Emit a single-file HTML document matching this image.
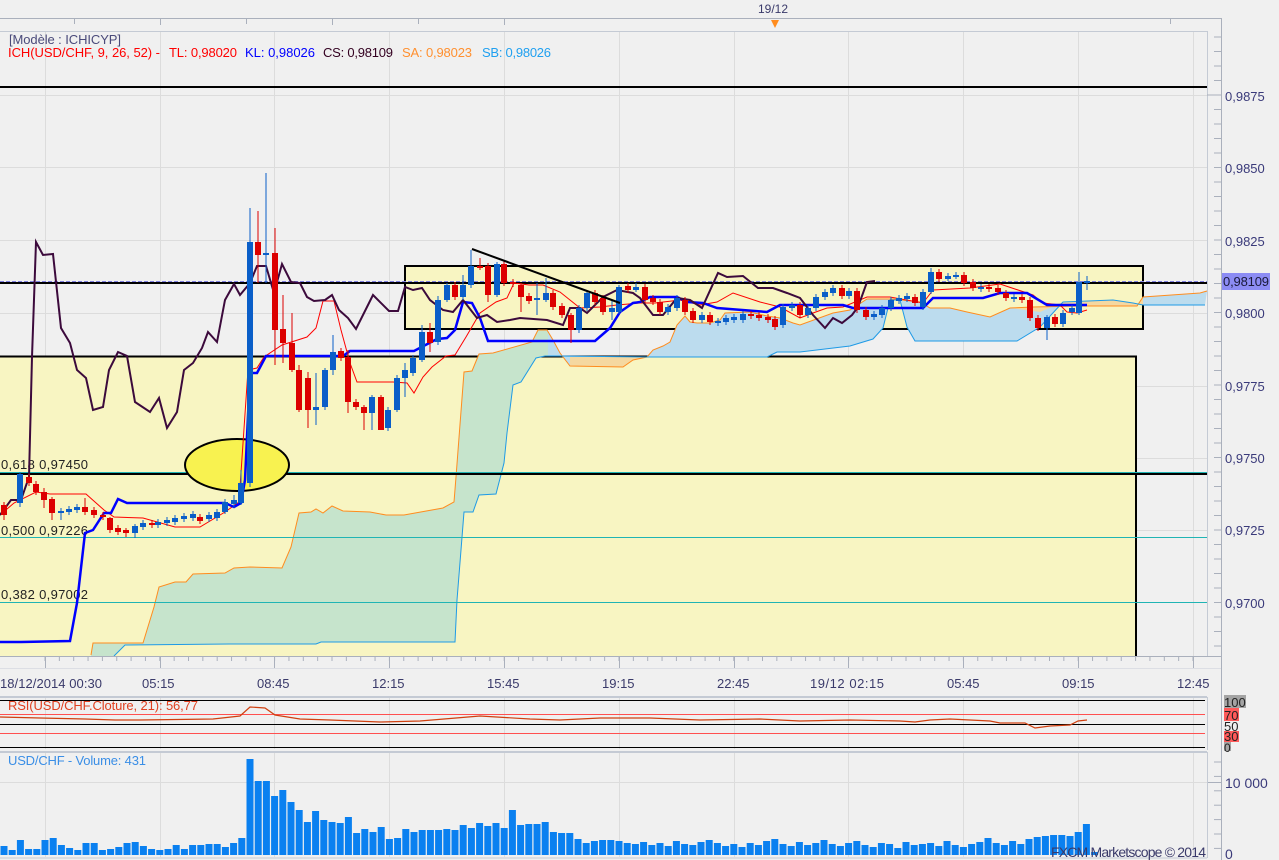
<!DOCTYPE html>
<html><head><meta charset="utf-8"><style>
html,body{margin:0;padding:0;background:#f0f0f0;width:1279px;height:860px;overflow:hidden}
svg{display:block;font-family:"Liberation Sans",sans-serif}
</style></head><body>
<svg id="s" width="1279" height="860" viewBox="0 0 1279 860" xmlns="http://www.w3.org/2000/svg">
<rect width="1279" height="860" fill="#f0f0f0"/>
<line x1="0" y1="18.5" x2="1221" y2="18.5" stroke="#aab0bc"/>
<line x1="1221.5" y1="18" x2="1221.5" y2="860" stroke="#aab0bc"/>
<line x1="0" y1="31.5" x2="1207" y2="31.5" stroke="#c4cad4"/>
<line x1="1207.5" y1="31" x2="1207.5" y2="657" stroke="#c4cad4"/>
<g stroke="#dcdcdc" stroke-width="1">
<line x1="45.5" y1="32" x2="45.5" y2="656"/><line x1="160.5" y1="32" x2="160.5" y2="656"/><line x1="274.5" y1="32" x2="274.5" y2="656"/><line x1="389.5" y1="32" x2="389.5" y2="656"/><line x1="504.5" y1="32" x2="504.5" y2="656"/><line x1="619.5" y1="32" x2="619.5" y2="656"/><line x1="734.5" y1="32" x2="734.5" y2="656"/><line x1="848.5" y1="32" x2="848.5" y2="656"/><line x1="963.5" y1="32" x2="963.5" y2="656"/><line x1="1078.5" y1="32" x2="1078.5" y2="656"/><line x1="1193.5" y1="32" x2="1193.5" y2="656"/>
<line x1="0" y1="95.5" x2="1207" y2="95.5"/><line x1="0" y1="167.5" x2="1207" y2="167.5"/><line x1="0" y1="240.5" x2="1207" y2="240.5"/><line x1="0" y1="313.5" x2="1207" y2="313.5"/><line x1="0" y1="386.5" x2="1207" y2="386.5"/><line x1="0" y1="458.5" x2="1207" y2="458.5"/><line x1="0" y1="530.5" x2="1207" y2="530.5"/>
</g>
<g stroke="#aab0bc"><line x1="74.5" y1="19" x2="74.5" y2="24"/><line x1="160.5" y1="19" x2="160.5" y2="25"/><line x1="246.5" y1="19" x2="246.5" y2="24"/><line x1="332.5" y1="19" x2="332.5" y2="25"/><line x1="418.5" y1="19" x2="418.5" y2="24"/><line x1="504.5" y1="19" x2="504.5" y2="25"/><line x1="1170.5" y1="19" x2="1170.5" y2="24"/></g>
<text x="758" y="13" font-size="12" fill="#3a3a6a">19/12</text>
<polygon points="771,20 779,20 775,28" fill="#ff8c1e"/>
<rect x="0" y="356.5" width="1136" height="300" fill="#f8f5c2"/>
<polyline points="0,356.5 1136,356.5 1136,656" fill="none" stroke="#000" stroke-width="2"/>
<rect x="405" y="266" width="738" height="63" fill="#f8f5c2" stroke="#000" stroke-width="2"/>
<clipPath id="cl"><rect x="0" y="0" width="548" height="656"/></clipPath>
<clipPath id="cr"><rect x="548" y="0" width="700" height="656"/></clipPath>
<g id="cloud"></g>
<g stroke="#20b4b4" stroke-width="1"><line x1="0" y1="472.5" x2="1207" y2="472.5"/><line x1="0" y1="537.5" x2="1207" y2="537.5"/><line x1="0" y1="602.5" x2="1207" y2="602.5"/></g>
<g font-size="13" fill="#222"><text x="1" y="469" textLength="87">0,618 0,97450</text><text x="1" y="535" textLength="87">0,500 0,97226</text><text x="1" y="599" textLength="87">0,382 0,97002</text></g>
<line x1="0" y1="474" x2="1207" y2="474" stroke="#000" stroke-width="2"/>
<line x1="0" y1="87" x2="1207" y2="87" stroke="#000" stroke-width="2"/>
<line x1="0" y1="283" x2="1207" y2="283" stroke="#000" stroke-width="2"/>
<line x1="0" y1="281.5" x2="1207" y2="281.5" stroke="#8080e0" stroke-dasharray="4,2"/>
<ellipse cx="237" cy="465" rx="52" ry="26" fill="#f8f250" stroke="#000" stroke-width="2"/>
<g id="ind"></g>
<g id="cd"></g>
<line x1="472" y1="249" x2="620" y2="303" stroke="#000" stroke-width="2"/>
<text x="9" y="44" font-size="13" fill="#4a4a7a" textLength="112">[Modèle : ICHICYP]</text>
<g font-size="13">
<text x="8" y="57" fill="#ff0000" textLength="152">ICH(USD/CHF, 9, 26, 52) -</text>
<text x="169" y="57" fill="#ff0000" textLength="68">TL: 0,98020</text>
<text x="245" y="57" fill="#0000ff" textLength="70">KL: 0,98026</text>
<text x="323" y="57" fill="#330020" textLength="70">CS: 0,98109</text>
<text x="402" y="57" fill="#ff9030" textLength="70">SA: 0,98023</text>
<text x="482" y="57" fill="#20a0f0" textLength="69">SB: 0,98026</text>
</g>
<g id="rt" stroke="#aab0bc"></g>
<g font-size="13" fill="#3a3a7a"><text x="1225" y="101">0,9875</text><text x="1225" y="173">0,9850</text><text x="1225" y="246">0,9825</text><text x="1225" y="318">0,9800</text><text x="1225" y="391">0,9775</text><text x="1225" y="463">0,9750</text><text x="1225" y="535">0,9725</text><text x="1225" y="608">0,9700</text></g>
<rect x="1222" y="273" width="48" height="17" fill="#8c8cf4"/>
<text x="1223" y="286" font-size="13" fill="#1a1a3a" textLength="46">0,98109</text>
<line x1="0" y1="656.5" x2="1221" y2="656.5" stroke="#aab0bc"/>
<line x1="0" y1="668.5" x2="1221" y2="668.5" stroke="#dcdee4"/>
<g id="bt" stroke="#aab0bc"></g>
<g font-size="13" fill="#3a3a6a"><text x="0" y="688" textLength="102">18/12/2014 00:30</text><text x="142" y="688">05:15</text><text x="257" y="688">08:45</text><text x="372" y="688">12:15</text><text x="487" y="688">15:45</text><text x="602" y="688">19:15</text><text x="717" y="688">22:45</text><text x="810" y="688" textLength="74">19/12 02:15</text><text x="947" y="688">05:45</text><text x="1062" y="688">09:15</text><text x="1177" y="688">12:45</text></g>
<line x1="0" y1="697" x2="1207" y2="697" stroke="#c4cad4" stroke-width="2"/>
<line x1="1207.5" y1="697" x2="1207.5" y2="750" stroke="#c4cad4"/>
<g stroke="#dcdcdc"><line x1="45.5" y1="698" x2="45.5" y2="749"/><line x1="160.5" y1="698" x2="160.5" y2="749"/><line x1="274.5" y1="698" x2="274.5" y2="749"/><line x1="389.5" y1="698" x2="389.5" y2="749"/><line x1="504.5" y1="698" x2="504.5" y2="749"/><line x1="619.5" y1="698" x2="619.5" y2="749"/><line x1="734.5" y1="698" x2="734.5" y2="749"/><line x1="848.5" y1="698" x2="848.5" y2="749"/><line x1="963.5" y1="698" x2="963.5" y2="749"/><line x1="1078.5" y1="698" x2="1078.5" y2="749"/><line x1="1193.5" y1="698" x2="1193.5" y2="749"/></g>
<line x1="0" y1="700.5" x2="1205" y2="700.5" stroke="#000"/>
<line x1="0" y1="714.5" x2="1205" y2="714.5" stroke="#ff5050"/>
<line x1="0" y1="724.5" x2="1205" y2="724.5" stroke="#000"/>
<line x1="0" y1="733.5" x2="1205" y2="733.5" stroke="#ff5050"/>
<line x1="0" y1="747.5" x2="1205" y2="747.5" stroke="#000"/>
<polyline fill="none" stroke="#d04010" stroke-width="1.2" points="0,717 40,718 85,719 115,720 140,720 213,719 240,716 250,707 265,708 275,715 300,719 330,720 380,722 420,721 480,716 530,719 560,720 600,718 650,718 700,720 760,719 800,721 850,720 900,721 915,722 930,720 950,719 990,721 1000,723 1025,723 1035,728 1050,726 1070,725 1078,721 1087,720"/>
<text x="8" y="710" font-size="13" fill="#e04020" textLength="190">RSI(USD/CHF.Cloture, 21): 56,77</text>
<rect x="1224" y="695" width="22" height="13" fill="#a4a4a4"/><text x="1224" y="707" font-size="13" fill="#222">100</text>
<rect x="1224" y="708" width="15" height="13" fill="#ff5a5a"/><text x="1224" y="720" font-size="13" fill="#222">70</text>
<text x="1224" y="731" font-size="13" fill="#222">50</text>
<rect x="1224" y="731" width="15" height="11" fill="#ff5a5a"/><text x="1224" y="741" font-size="13" fill="#222">30</text>
<rect x="1224" y="742" width="7" height="9" fill="#a4a4a4"/><text x="1224" y="752" font-size="12" fill="#222">0</text>
<line x1="0" y1="752" x2="1207" y2="752" stroke="#c4cad4" stroke-width="2"/>
<line x1="1207.5" y1="752" x2="1207.5" y2="858" stroke="#c4cad4"/>
<line x1="0" y1="858" x2="1207" y2="858" stroke="#c4cad4"/>
<g stroke="#dcdcdc"><line x1="45.5" y1="753" x2="45.5" y2="857"/><line x1="160.5" y1="753" x2="160.5" y2="857"/><line x1="274.5" y1="753" x2="274.5" y2="857"/><line x1="389.5" y1="753" x2="389.5" y2="857"/><line x1="504.5" y1="753" x2="504.5" y2="857"/><line x1="619.5" y1="753" x2="619.5" y2="857"/><line x1="734.5" y1="753" x2="734.5" y2="857"/><line x1="848.5" y1="753" x2="848.5" y2="857"/><line x1="963.5" y1="753" x2="963.5" y2="857"/><line x1="1078.5" y1="753" x2="1078.5" y2="857"/><line x1="1193.5" y1="753" x2="1193.5" y2="857"/><line x1="0" y1="782.5" x2="1207" y2="782.5"/></g>
<g id="vol"></g>
<text x="8" y="765" font-size="13" fill="#3a8ee6" textLength="138">USD/CHF - Volume: 431</text>
<text x="1225" y="788" font-size="14" fill="#3a3a7a">10 000</text>
<text x="1225" y="859" font-size="14" fill="#3a3a7a">0</text>
<text x="1051" y="857" font-size="14" fill="#3a3a6a" textLength="155">FXCM Marketscope © 2014</text>
</svg>
<script>
var NS="http://www.w3.org/2000/svg";
function el(p,t,a){var e=document.createElementNS(NS,t);for(var k in a)e.setAttribute(k,a[k]);document.getElementById(p).appendChild(e);return e;}
var A="91,655 93,643 143,643 154,607 159,587 175,582 186,582 193,574 225,573 234,568 250,567 282,568 291,547 299,513 311,512 316,509 323,513 332,506 343,511 370,512 386,515 404,515 443,508 454,502 456,477 464,372 472,371 479,354 493,353 532,342 538,330 547,330 553,340 560,353 570,366 623,367 633,360 647,357 653,350 663,346 670,342 677,325 685,316 690,322 697,323 710,323 720,320 725,313 750,312 767,316 780,318 793,323 800,325 833,313 850,310 867,299 893,299 920,302 930,308 950,308 967,312 990,317 1010,308 1033,307 1080,306 1137,306 1143,297 1200,293 1207,291";
var B="114,656 125,645 229,644 316,644 321,642 455,642 457,600 461,550 464,512 473,512 479,495 496,494 504,463 507,433 513,385 521,382 536,358 545,356 560,356 647,357 767,357 777,352 800,352 850,346 873,339 883,328 890,300 900,300 907,327 915,341 1017,341 1040,327 1063,302 1113,300 1133,303 1143,305 1205,305";
var Bs=B.split(" ").reverse().join(" ");
var poly=A+" "+Bs+" 91,656";
el("cloud","polygon",{points:poly,fill:"#c6e4cc","clip-path":"url(#cl)"});
el("cloud","polygon",{points:poly,fill:"#bcdcee","clip-path":"url(#cr)"});
el("cloud","polygon",{points:"570,357 647,357 633,360 623,367 570,366",fill:"#f5d8a0"});
el("cloud","polygon",{points:"1010,308 1033,307 1080,306 1137,306 1143,297 1143,305 1133,303 1113,300 1063,302 1040,312",fill:"#f5d8a0"});
el("cloud","polyline",{points:A,fill:"none",stroke:"#ff8c1e","stroke-width":1});
el("cloud","polyline",{points:B,fill:"none",stroke:"#1e9ae6","stroke-width":1});
el("ind","polyline",{fill:"none",stroke:"#ff0000","stroke-width":1,points:"0,515 14,503 36,492 50,494 86,494 104,510 114,517 143,518 175,527 200,527 225,512 239,502 248,370 257,368 264,357 282,345 307,337 316,328 323,301 334,301 341,330 350,363 357,382 393,382 407,383 414,393 423,377 432,367 446,356 455,355 466,337 480,313 496,302 507,298 514,283 529,285 543,285 560,292 580,308 600,307 617,305 640,303 655,303 680,300 700,305 717,302 733,293 760,302 780,307 800,318 813,313 827,308 843,307 867,297 890,297 923,303 933,290 970,288 1000,284 1033,295 1043,303 1060,305 1067,312 1077,313 1087,310"});
el("ind","polyline",{fill:"none",stroke:"#0000ff","stroke-width":2.5,points:"0,642 21,642 70,641 77,603 85,533 93,530 104,513 111,513 118,499 127,503 225,503 234,507 241,503 245,480 250,373 257,373 266,356 343,356 350,351 414,351 437,339 447,338 455,330 463,302 472,303 480,318 488,341 595,341 610,328 620,312 633,303 640,302 650,297 677,297 687,302 703,303 717,308 767,312 780,305 843,305 853,308 923,308 933,298 983,298 1000,293 1027,293 1047,305 1087,305"});
el("ind","polyline",{fill:"none",stroke:"#3c0a3c","stroke-width":2,points:"0,515 11,500 21,500 29,477 32,357 36,242 43,255 53,254 61,328 70,343 77,370 86,378 93,410 103,407 109,370 118,352 127,356 135,402 150,412 159,398 167,428 177,412 184,370 193,363 202,348 208,332 217,342 225,300 234,284 240,295 250,283 257,266 266,266 274,293 282,264 291,282 300,283 307,297 314,301 325,300 332,295 339,310 348,318 356,329 373,295 389,311 398,311 405,287 413,290 422,288 430,300 443,310 453,312 463,300 477,318 487,315 497,322 510,320 520,318 547,320 563,325 570,308 580,308 587,313 603,297 617,290 633,293 640,298 653,315 663,315 677,298 690,300 702,308 718,273 727,277 743,276 758,288 773,288 787,293 800,298 813,315 825,328 833,318 842,323 852,315 858,307 867,282 875,281"});
var C=[[4,0,505,515,502,520],[20,1,474,503,472,507],[29,0,477,483],[36,0,484,492],[44,0,492,500,488,508],[52,0,499,513,497,520],[61,1,511,513,508,520],[69,1,509,512],[77,1,507,510],[85,0,507,512,498,515],[94,0,510,515],[103,0,515,517,512,520],[110,0,518,530,517,533],[118,0,528,532],[126,0,530,533,528,537],[135,1,526,533,524,538],[143,1,523,527],[152,0,523,525],[158,1,522,525],[167,1,520,523],[175,1,518,522],[184,1,516,519],[193,1,514,518],[200,0,517,521],[209,1,515,519],[217,1,512,518],[225,1,502,512,499,514],[234,1,500,504,495,508],[241,1,483,503,470,505],[250,1,242,483,208,487],[258,0,242,255,211,283],[266,1,253,255,173,283],[275,0,253,330,228,365],[283,0,329,343,295,363],[292,0,343,370,313,372],[299,0,370,410,365,412],[308,0,378,410,372,428],[316,1,407,410,373,425],[325,1,370,407,368,410],[333,1,352,370,335,375],[341,0,351,358],[348,0,357,402,350,413],[356,0,402,407],[364,0,407,413,405,430],[372,1,397,413,395,430],[381,0,397,430,395,430],[388,1,410,428],[397,1,378,410,375,412],[405,1,370,378,363,397],[413,1,358,373],[422,1,332,360,325,362],[430,0,332,343,323,352],[438,1,300,342,296,345],[447,1,285,300,283,302],[455,0,285,297],[463,1,285,297,275,300],[471,1,266,285,250,288],[480,0,266,268,258,270],[488,0,266,295,263,302],[497,1,264,295,262,297],[504,0,264,283],[513,0,282,284],[521,0,285,297,283,312],[529,0,296,301],[537,1,298,300,283,315],[546,1,293,300,278,302],[553,0,293,307],[562,0,306,315],[571,0,315,330,313,343],[579,1,308,330],[587,1,293,308],[595,0,293,302],[603,0,298,312],[612,1,308,312,300,320],[619,1,287,312,285,314],[628,0,286,290],[636,1,287,290,283,292],[645,0,287,300],[653,0,298,302],[660,0,302,312],[668,1,307,312],[677,1,298,308],[685,0,300,312],[693,0,311,320],[702,1,315,320],[710,0,315,322],[718,1,321,323],[726,1,318,322],[734,1,317,320],[743,1,314,320],[751,0,314,316],[759,0,315,318],[768,0,317,320],[775,0,319,327],[783,1,307,325],[792,1,305,308],[800,0,305,315],[808,1,308,315],[816,1,297,308],[825,1,292,297],[833,1,288,293],[842,0,288,296],[849,1,291,296],[857,0,291,310],[866,0,310,317],[874,1,314,317],[882,1,308,315],[891,1,300,308],[899,1,298,301],[907,1,296,299],[915,0,297,303],[923,1,292,307],[931,1,272,292,268,294],[939,0,272,279],[948,1,276,279,273,281],[956,1,275,277,272,279],[964,0,275,283],[973,0,282,288],[981,1,287,289],[989,0,287,289],[998,0,288,292],[1006,0,293,298],[1014,1,297,299],[1022,0,297,300],[1030,0,300,318],[1038,0,318,328],[1047,1,317,328,315,340],[1055,0,317,324],[1063,1,313,324],[1072,1,308,312],[1079,1,282,313,272,315],[1087,1,281,283,276,290]];
C.forEach(function(c){var col=c[1]?"#0a5ec8":"#dc0000";var wt=c[4]||c[2]-3,wb=c[5]||c[3]+3;
el("cd","line",{x1:c[0],y1:wt,x2:c[0],y2:wb,stroke:col,"stroke-width":1});
el("cd","rect",{x:c[0]-3,y:c[2],width:6,height:Math.max(2,c[3]-c[2]),fill:col});});
var V=[9,5,15,6,6,15,17,10,7,5,12,12,5,6,8,12,13,9,6,5,6,10,6,10,10,11,11,8,12,17,96,74,74,59,65,53,45,33,44,35,33,32,38,22,26,23,28,16,17,26,23,25,25,25,26,25,30,27,32,29,32,27,45,30,31,31,33,23,22,22,16,12,14,15,15,14,12,11,13,10,12,9,14,11,10,13,15,12,9,11,8,12,10,14,16,11,9,13,10,12,15,11,9,12,14,10,8,12,11,7,13,10,11,12,9,14,10,8,11,13,17,12,10,14,11,16,18,19,20,20,19,23,31,3];
V.forEach(function(h,i){var x=4+i*8.2;el("vol","rect",{x:x-3.5,y:855-h,width:7,height:h,fill:"#0a80f0"});});
for(var y=37;y<656;y+=14.5){var maj=Math.abs((y-95)%72.6)<3;el("rt","line",{x1:maj?1207:1214,y1:y,x2:1221,y2:y});}
for(var y=762;y<856;y+=14.4){el("rt","line",{x1:1214,y1:y,x2:1221,y2:y});}
el("rt","line",{x1:1207,y1:782.5,x2:1221,y2:782.5});
for(var x=45;x<1207;x+=14.35){el("bt","line",{x1:x,y1:657,x2:x,y2:661});}
[45,160,274,389,504,619,734,848,963,1078,1193].forEach(function(x){el("bt","line",{x1:x+.5,y1:657,x2:x+.5,y2:668});});
</script>
</body></html>
